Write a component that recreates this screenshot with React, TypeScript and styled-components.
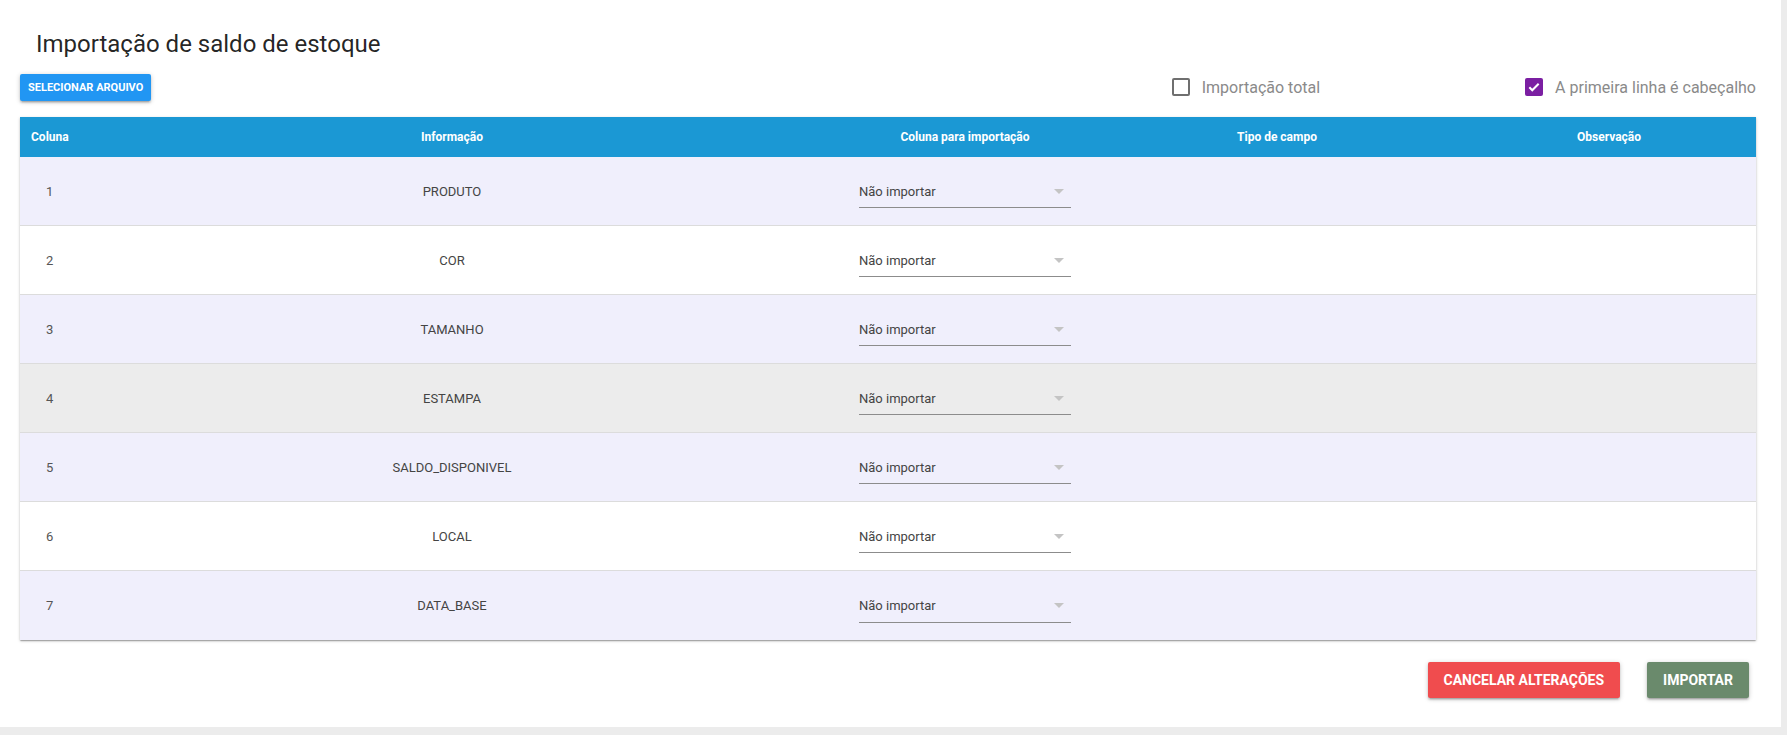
import styled, { createGlobalStyle, css } from 'styled-components';

const GlobalStyle = createGlobalStyle`
  body {
    margin: 0;
    background: #ececec;
    font-family: Roboto, 'Liberation Sans', sans-serif;
  }
`;

const Card = styled.div`
  width: calc(100% - 6px);
  height: 727px;
  box-sizing: border-box;
  background: #fff;
  padding: 28px 25px 0 20px;
`;

const Title = styled.h1`
  margin: 0 0 13px 16px;
  font-size: 24px;
  font-weight: 400;
  line-height: 32px;
  color: rgba(0, 0, 0, 0.87);
`;

const Toolbar = styled.div`
  display: flex;
  align-items: center;
  justify-content: space-between;
  height: 28px;
  margin-bottom: 16px;
`;

const SmallButton = styled.button`
  height: 27px;
  padding: 0 8px;
  border: none;
  border-radius: 2px;
  background: #2196f3;
  color: #fff;
  font-family: inherit;
  font-size: 11px;
  font-weight: 700;
  text-transform: uppercase;
  box-shadow: 0 1px 5px rgba(0, 0, 0, 0.2), 0 2px 2px rgba(0, 0, 0, 0.14),
    0 3px 1px -2px rgba(0, 0, 0, 0.12);
`;

const Options = styled.div`
  display: flex;
  align-items: center;
  gap: 205px;
`;

const Option = styled.label`
  display: flex;
  align-items: center;
  gap: 12px;
  font-size: 16px;
  color: #8a8a8a;
`;

const Box = styled.span<{ $checked?: boolean }>`
  width: 18px;
  height: 18px;
  box-sizing: border-box;
  border-radius: 2px;
  display: flex;
  align-items: center;
  justify-content: center;
  ${({ $checked }) =>
    $checked
      ? css`
          background: #7b1fa2;
        `
      : css`
          border: 2px solid #6f6f6f;
        `}
`;

const Table = styled.div`
  box-shadow: 0 1px 3px rgba(0, 0, 0, 0.2), 0 1px 1px rgba(0, 0, 0, 0.14),
    0 2px 1px -1px rgba(0, 0, 0, 0.12);
`;

const grid = css`
  display: grid;
  grid-template-columns: 46px 772px 254px 370px 1fr;
  align-items: center;
`;

const HeadRow = styled.div`
  ${grid};
  height: 40px;
  background: #1b98d4;
  color: #fff;
  font-size: 12px;
  font-weight: 700;
`;

const HeadCell = styled.div<{ $left?: boolean }>`
  text-align: ${({ $left }) => ($left ? 'left' : 'center')};
  padding-left: ${({ $left }) => ($left ? '11px' : '0')};
  white-space: nowrap;
`;

const tones: Record<string, string> = {
  lavender: '#f0effc',
  white: '#ffffff',
  grey: '#ececec',
};

const Row = styled.div<{ $tone: string }>`
  ${grid};
  height: 69px;
  box-sizing: border-box;
  border-bottom: 1px solid #dcdcdc;
  background: ${({ $tone }) => tones[$tone]};
  font-size: 13px;
  color: #444;
  &:last-child {
    border-bottom: none;
  }
`;

const Cell = styled.div<{ $left?: boolean }>`
  text-align: ${({ $left }) => ($left ? 'left' : 'center')};
  padding-left: ${({ $left }) => ($left ? '26px' : '0')};
  color: ${({ $left }) => ($left ? '#555' : '#444')};
`;

const SelectCell = styled.div`
  padding: 0 21px;
`;

const Select = styled.div`
  display: flex;
  align-items: center;
  justify-content: space-between;
  height: 32px;
  margin-top: 1px;
  border-bottom: 1px solid #8c8c8c;
  font-size: 13px;
  color: #444;
  svg {
    margin-right: 7px;
  }
`;

const Footer = styled.div`
  display: flex;
  justify-content: flex-end;
  gap: 27px;
  margin-top: 22px;
  padding-right: 7px;
`;

const ActionButton = styled.button<{ $variant: 'cancel' | 'confirm' }>`
  height: 36px;
  padding: 0 16px;
  border: none;
  border-radius: 2px;
  color: #fff;
  font-family: inherit;
  font-size: 14px;
  font-weight: 700;
  text-transform: uppercase;
  background: ${({ $variant }) => ($variant === 'cancel' ? '#f04c4e' : '#6a8a6c')};
  box-shadow: 0 1px 5px rgba(0, 0, 0, 0.2), 0 2px 2px rgba(0, 0, 0, 0.14),
    0 3px 1px -2px rgba(0, 0, 0, 0.12);
`;

const rows = [
  { n: 1, info: 'PRODUTO', tone: 'lavender' },
  { n: 2, info: 'COR', tone: 'white' },
  { n: 3, info: 'TAMANHO', tone: 'lavender' },
  { n: 4, info: 'ESTAMPA', tone: 'grey' },
  { n: 5, info: 'SALDO_DISPONIVEL', tone: 'lavender' },
  { n: 6, info: 'LOCAL', tone: 'white' },
  { n: 7, info: 'DATA_BASE', tone: 'lavender' },
];

const Arrow = () => (
  <svg width="10" height="5" viewBox="0 0 10 5">
    <polygon points="0,0 10,0 5,5" fill="#c4c4c4" />
  </svg>
);

const Check = () => (
  <svg width="14" height="14" viewBox="0 0 24 24">
    <path d="M4 12.5l5 5L20 6.5" fill="none" stroke="#fff" strokeWidth="3.5" />
  </svg>
);

export default function App() {
  return (
    <>
      <GlobalStyle />
      <Card>
        <Title>Importação de saldo de estoque</Title>
        <Toolbar>
          <SmallButton>Selecionar arquivo</SmallButton>
          <Options>
            <Option>
              <Box />
              Importação total
            </Option>
            <Option>
              <Box $checked>
                <Check />
              </Box>
              A primeira linha é cabeçalho
            </Option>
          </Options>
        </Toolbar>
        <Table>
          <HeadRow>
            <HeadCell $left>Coluna</HeadCell>
            <HeadCell>Informação</HeadCell>
            <HeadCell>Coluna para importação</HeadCell>
            <HeadCell>Tipo de campo</HeadCell>
            <HeadCell>Observação</HeadCell>
          </HeadRow>
          {rows.map((r) => (
            <Row key={r.n} $tone={r.tone}>
              <Cell $left>{r.n}</Cell>
              <Cell>{r.info}</Cell>
              <SelectCell>
                <Select>
                  Não importar
                  <Arrow />
                </Select>
              </SelectCell>
              <Cell />
              <Cell />
            </Row>
          ))}
        </Table>
        <Footer>
          <ActionButton $variant="cancel">Cancelar alterações</ActionButton>
          <ActionButton $variant="confirm">Importar</ActionButton>
        </Footer>
      </Card>
    </>
  );
}
